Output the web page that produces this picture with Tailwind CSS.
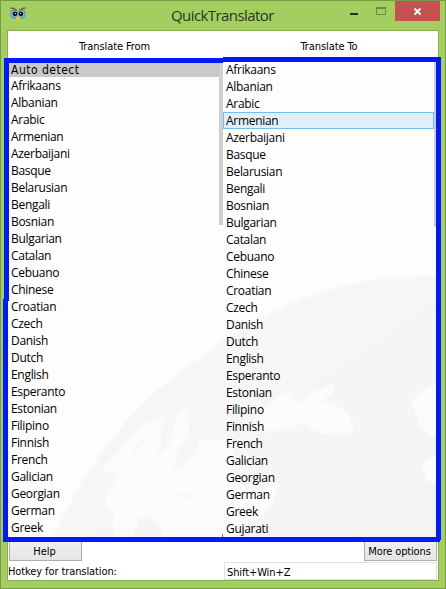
<!DOCTYPE html>
<html lang="en">
<head>
<meta charset="utf-8">
<title>QuickTranslator</title>
<script src="https://cdn.jsdelivr.net/npm/@tailwindcss/browser@4"></script>
</head>
<body class="overflow-hidden">
<div class="relative flex h-[589px] w-[446px] flex-col border border-[#7b9a49] bg-[#a2cf60] px-[6px] pb-[7px] text-black">
  <header class="relative flex h-[29px] shrink-0 justify-end">
    <svg class="absolute left-[3px] top-[5px]" width="16" height="16" viewBox="0 0 16 16">
      <ellipse cx="4.5" cy="8" rx="4.2" ry="4.9" fill="#5f9ec0"/><ellipse cx="11.5" cy="8" rx="4.2" ry="4.9" fill="#5f9ec0"/>
      <circle cx="4.7" cy="7.8" r="3" fill="#8fcdea"/><circle cx="11.3" cy="7.8" r="3" fill="#8fcdea"/>
      <circle cx="5" cy="7.8" r="2.4" fill="#08101c"/><circle cx="11" cy="7.8" r="2.4" fill="#08101c"/>
      <path d="M5 7h1v1H5zM10 7h1v1h-1z" fill="#e8f8ff"/>
      <path d="M.5 2.2q3.5-.6 6 2.2M15.500 2.200q-3.5-.6-6 2.200" fill="none" stroke="#8a6a2a" stroke-width="1.8"/>
      <path d="M6.200 10.500h3.600v2.500L8 15.200l-1.800-2.200z" fill="#f5c51e"/>
    </svg>
    <h1 class="absolute left-[164px] top-[3px] whitespace-nowrap font-['Open_Sans',sans-serif] text-[15px] leading-[22px] tracking-[-0.58px] text-[#2c3420]">QuickTranslator</h1>
    <svg class="mr-[-1px]" width="96" height="20" viewBox="0 0 96 20">
      <path d="M6 12h8v2H6z" fill="#26301b"/><path d="M32.500 6.500h9v7h-9z" fill="none" stroke="#6a8642"/><path d="M32 6h10v2H32z" fill="#6a8642"/>
      <path d="M51 0h45v20H51z" fill="#c75050"/><path d="M70.500 7.500l6 6M76.500 7.500l-6 6" stroke="white" stroke-width="1.8"/>
    </svg>
  </header>
  <main class="flex min-h-0 flex-1 flex-col border border-[#87ad50] bg-white">
    <div class="grid h-[31px] shrink-0 grid-cols-[215px_1fr] pt-[7px] text-center font-['DejaVu_Sans_Condensed','DejaVu_Sans',sans-serif] text-[11px] leading-[17px] tracking-[-0.1px]">
      <div class="pr-[2px]">Translate From</div><div class="pr-[3px]">Translate To</div>
    </div>
    <section class="relative flex h-[478px] shrink-0 bg-[#fdfdfd]">
      <svg class="absolute inset-0" width="430" height="478" viewBox="8 62 430 478">
        <defs>
          <linearGradient id="globe" x1="0" y1="0" x2="1" y2="1"><stop offset="0" stop-color="#f8f8f8"/><stop offset="1" stop-color="#f3f3f3"/></linearGradient>
          <filter id="soft"><feGaussianBlur stdDeviation="0.8"/></filter>
        </defs>
        <g filter="url(#soft)">
        <path d="M52 540Q92 450 155 392Q215 340 290 304Q360 273 440 277V545H50z" fill="url(#globe)"/>
        <g fill="#fcfcfc">
          <path d="M101 470L123 447Q135 430 145 423L168 415L160 430Q163 442 157 454L140 474L137 466L153 459L170 443L173 428Q178 410 188 403L187 416Q191 427 188 434L180 447L173 468L183 467L188 458L196 454L197 443L203 438L211 441L220 438L234 452L232 474L252 493L280 483Q276 497 270 510L247 524L232 540H165Q161 527 153 519Q141 514 137 523L132 538H117L112 527L113 513L105 502L108 490L120 472z"/>
          <path d="M246 430Q256 416 267 408Q276 394 295 390L290 400L304 402L310 393L333 384L335 390L323 401Q338 405 347 413Q357 426 351 432Q340 438 317 432L303 423Q284 434 246 431z"/>
          <path d="M438 384q-15 4-28 18q6 6 7 17q6 13 21 20zM438 455q-21 6-14 20q1 9 14 6z"/>
        </g>
        <path d="M174 491q8 7 20 4M133 453l12-13" stroke="#f5f5f5" stroke-width="2" fill="none"/>
        </g>
      </svg>
      <div class="relative w-[215px] shrink-0 font-['Open_Sans',sans-serif] text-[12px] leading-[17px] tracking-[-0.3px]">
        <div class="mr-[4px] h-[15px] bg-[#c9c9c9] pl-[3px] font-['DejaVu_Sans_Condensed','DejaVu_Sans',sans-serif] text-[12px] leading-[17px] tracking-[0.5px]">Auto detect</div>
        <ul id="from" class="pl-[3px]"></ul>
        <div class="absolute right-0 top-0 h-[163px] w-[4px] bg-[#d0d0d0]"></div>
      </div>
      <ul id="to" class="relative mt-[-1px] flex-1 font-['Open_Sans',sans-serif] text-[12px] leading-[17px] tracking-[-0.3px]"></ul>
      <div class="absolute right-[1px] top-0 h-[165px] w-[3px] bg-[#d0d0d0]"></div>
      <div class="absolute left-[214px] top-[472px] h-[3px] w-px bg-[#777]"></div>
    </section>
    <footer class="flex flex-1 flex-col font-['DejaVu_Sans_Condensed','DejaVu_Sans',sans-serif] text-[11px]">
      <div class="flex justify-between pl-[1px] pr-[1px]">
        <button class="h-[21px] w-[73px] border border-[#adadad] bg-linear-to-b from-[#f0f0f0] to-[#e5e5e5] pr-[2px] pt-[3px] leading-[16px]">Help</button>
        <button class="h-[21px] w-[73px] whitespace-nowrap border border-[#adadad] bg-linear-to-b from-[#f0f0f0] to-[#e5e5e5] pr-[2px] pt-[3px] leading-[16px] tracking-[-0.15px]">More options</button>
      </div>
      <div class="mt-[1px] flex justify-between pr-[1px] leading-[17px]">
        <span class="pt-[1px] tracking-[-0.1px]">Hotkey for translation:</span>
        <div class="h-[18px] w-[213px] border border-[#dedeee] pl-[2px] pt-px tracking-[-0.1px]">Shift+Win+Z</div>
      </div>
    </footer>
  </main>
  <svg class="absolute left-[-1px] top-[-1px]" width="446" height="589" viewBox="0 0 446 589" shape-rendering="crispEdges">
    <path fill="#0019ff" d="M4 58h219v5H4zM223 57h218v5H223zM4 58h5v243H4zM3 299h5v243H3zM436 58h5v482h-5zM3 537h437v5H3z"/>
  </svg>
</div>
<script>
const languages = "Afrikaans Albanian Arabic Armenian Azerbaijani Basque Belarusian Bengali Bosnian Bulgarian Catalan Cebuano Chinese Croatian Czech Danish Dutch English Esperanto Estonian Filipino Finnish French Galician Georgian German Greek Gujarati".split(" ");
for (const [id, count] of [["from", 27], ["to", 28]]) {
  const list = document.getElementById(id);
  languages.slice(0, count).forEach(name => {
    const row = document.createElement("li");
    row.textContent = name;
    if (id === "to") row.className = name === "Armenian" ? "mr-[4px] h-[17px] border border-[#70c0e7] bg-[#e1f0f8] pl-[2px] leading-[15px]" : "h-[17px] pl-[3px]";
    else row.className = "h-[17px]";
    list.append(row);
  });
}
</script>
</body>
</html>
